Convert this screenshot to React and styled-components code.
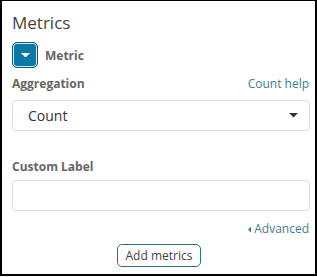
import React from 'react'
import styled, { createGlobalStyle } from 'styled-components'

const Global = createGlobalStyle`
    html, body {
        margin: 0;
        padding: 0;
        background: #fff;
    }
    body {
        font-family: 'Open Sans', 'Liberation Sans', sans-serif;
    }
`

function Caret({ dir = 'down', size = 8, color = '#fff' }) {
    const pts = dir === 'down' ? '0,0 8,0 4,4' : '4,0 4,8 0,4'
    const vb = dir === 'down' ? '0 0 8 4' : '0 0 4 8'
    const w = dir === 'down' ? size : size / 2
    const h = dir === 'down' ? size / 2 : size
    return (
        <svg width={w} height={h} viewBox={vb}>
            <polygon points={pts} fill={color} />
        </svg>
    )
}

function App() {
    return (
        <>
            <Global />
            <Panel>
                <Title>Metrics</Title>
                <MetricRow>
                    <ToggleButton>
                        <Caret dir="down" size={9} />
                    </ToggleButton>
                    <MetricName>Metric</MetricName>
                </MetricRow>

                <FieldHead top={8} bottom={8}>
                    <Label>Aggregation</Label>
                    <HelpLink>Count help</HelpLink>
                </FieldHead>
                <Select>
                    <span>Count</span>
                    <Caret dir="down" size={9} color="#333" />
                </Select>

                <FieldHead top={28} bottom={5}>
                    <Label>Custom Label</Label>
                </FieldHead>
                <Input />

                <AdvancedRow>
                    <Caret dir="left" size={7} color="#3b7f93" />
                    <span>Advanced</span>
                </AdvancedRow>

                <ButtonRow>
                    <AddButton>Add metrics</AddButton>
                </ButtonRow>
            </Panel>
        </>
    )
}

export default App

const Panel = styled.div`
    box-sizing: border-box;
    width: 317px;
    height: 276px;
    border: 1px solid #000;
    border-left-width: 2px;
    border-right-width: 2px;
    border-bottom-width: 2px;
    padding: 10px 6px 0 10px;
    display: flex;
    flex-direction: column;
`

const Title = styled.div`
    font-size: 17px;
    line-height: 24px;
    color: #444;
`

const MetricRow = styled.div`
    display: flex;
    align-items: center;
    gap: 7px;
    margin-top: 7px;
`

const ToggleButton = styled.div`
    box-sizing: border-box;
    width: 26px;
    height: 26px;
    border-radius: 5px;
    background: #0b79a6;
    border: 1px solid #0a5c7e;
    box-shadow: inset 0 0 0 1px #d6ecf5;
    display: flex;
    align-items: center;
    justify-content: center;
`

const MetricName = styled.span`
    font-size: 12px;
    font-weight: 700;
    color: #666;
`

const FieldHead = styled.div`
    display: flex;
    justify-content: space-between;
    align-items: baseline;
    line-height: 16px;
    margin-top: ${p => p.top}px;
    margin-bottom: ${p => p.bottom}px;
`

const Label = styled.span`
    font-size: 12px;
    font-weight: 700;
    color: #666;
`

const HelpLink = styled.span`
    font-size: 12px;
    color: #3b7f93;
`

const Select = styled.div`
    box-sizing: border-box;
    height: 31px;
    width: 298px;
    border: 1px solid #ddd;
    border-radius: 4px;
    display: flex;
    align-items: center;
    justify-content: space-between;
    padding: 0 11px 0 15px;
    font-size: 14px;
    color: #333;
`

const Input = styled.div`
    box-sizing: border-box;
    height: 31px;
    width: 298px;
    border: 1px solid #ddd;
    border-radius: 4px;
`

const AdvancedRow = styled.div`
    display: flex;
    justify-content: flex-end;
    align-items: center;
    gap: 3px;
    margin-top: 10px;
    font-size: 12px;
    line-height: 16px;
    color: #3b7f93;
`

const ButtonRow = styled.div`
    display: flex;
    justify-content: center;
    margin-top: 7px;
    padding-right: 3px;
`

const AddButton = styled.div`
    box-sizing: border-box;
    height: 23px;
    padding: 0 8px;
    border: 1px solid #2d6f80;
    border-radius: 5px;
    font-size: 12px;
    line-height: 21px;
    color: #444;
`
